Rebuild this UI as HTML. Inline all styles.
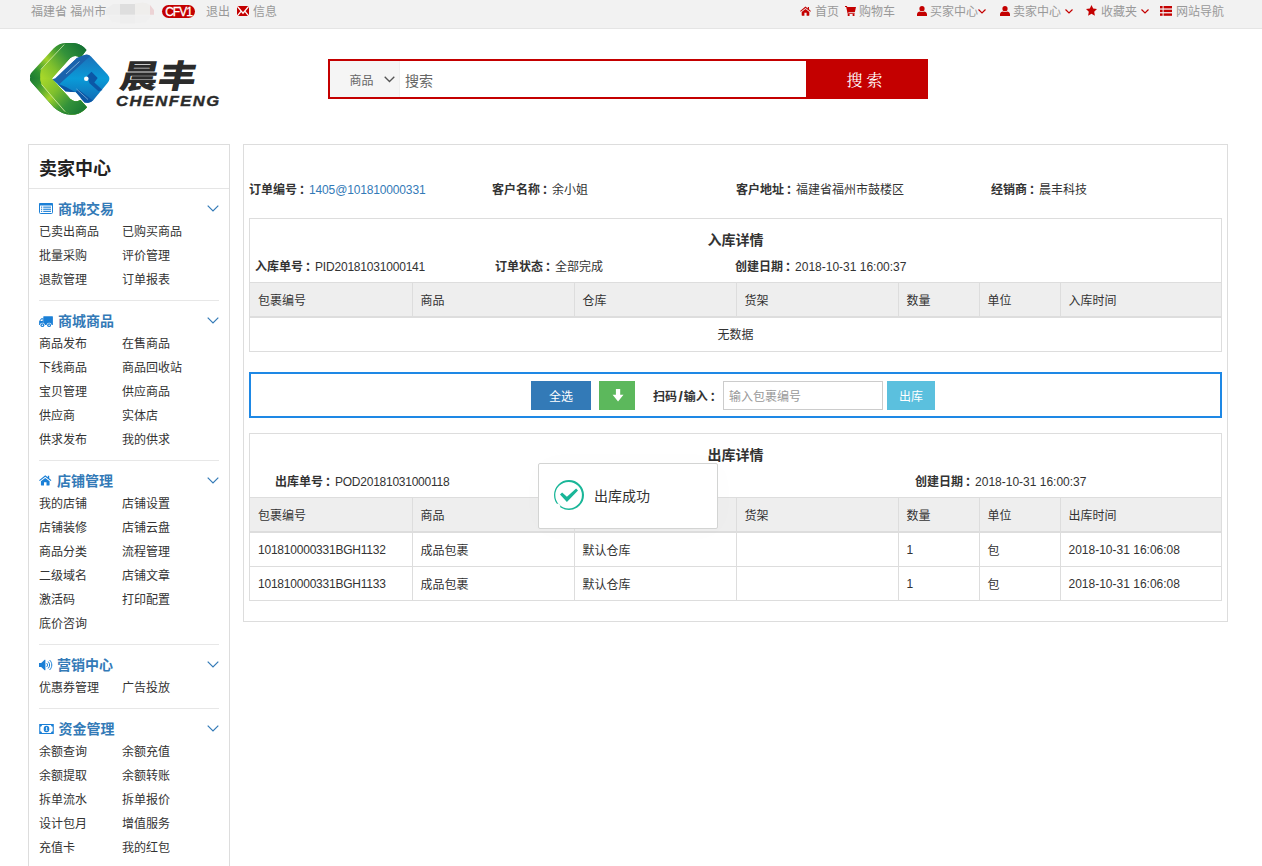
<!DOCTYPE html>
<html lang="zh-CN">
<head>
<meta charset="utf-8">
<title>卖家中心 - 出库</title>
<style>
*{box-sizing:border-box;margin:0;padding:0}
html,body{width:1262px;height:866px;overflow:hidden;background:#fff}
body{font-family:"Liberation Sans","Noto Sans CJK SC",sans-serif;font-size:12px;color:#333;position:relative;line-height:17px}
a{text-decoration:none;color:inherit}
.abs{position:absolute;white-space:nowrap}
/* top bar */
#topbar{position:absolute;left:0;top:0;width:1262px;height:29px;background:#f2f2f2;border-bottom:1px solid #e5e5e5;color:#999}
#topbar .t{position:absolute;top:4px;line-height:17px;white-space:nowrap}
#topbar svg{position:absolute}
.badge{position:absolute;left:162px;top:5px;width:33px;height:13px;border-radius:7px;background:#c40000;color:#fff;font-size:12px;line-height:15px;text-align:center;letter-spacing:-1px;padding-right:0;font-weight:normal;-webkit-text-stroke:0.3px #fff}
/* header */
#search{position:absolute;left:328px;top:59px;width:600px;height:40px;border:2px solid #c40000;background:#fff}
#search .sel{position:absolute;left:0;top:0;width:70px;height:36px;background:#f5f5f5;border-right:1px solid #eee;color:#666}
#search .sel span{position:absolute;left:19.500px;top:12px;line-height:17px}
#search .q{position:absolute;left:75px;top:9.500px;font-size:14px;line-height:20px;color:#666}
#search .btn{position:absolute;left:476px;top:-2px;width:122px;height:40px;background:#c40000;color:#fff;font-family:"Liberation Serif","Noto Serif CJK SC",serif;font-size:16px;line-height:44px;text-align:center;letter-spacing:4px;padding-left:0;text-indent:-1px}
/* sidebar */
#side{position:absolute;left:28px;top:144px;width:202px;height:740px;border:1px solid #ddd;background:#fff}
#side h2{position:absolute;left:10px;top:12px;font-size:18px;line-height:24px;font-weight:bold;color:#222}
#side .hr0{position:absolute;left:0;top:43px;width:200px;height:1px;background:#e5e5e5}
.sec{position:absolute;left:10px;width:180px;border-top:1px solid #e7e7e7}
.sec.first{border-top-color:transparent}
.sec .hd{position:absolute;left:0;top:10px;height:20px;line-height:20px;font-size:14px;font-weight:bold;color:#337ab7;white-space:nowrap}
.sec .hd span{position:absolute;left:19px;top:0}
.sec .hd svg{position:absolute;left:0;top:4px}
.sec .chev{position:absolute;right:0.300px;top:16px}
.sec a{position:absolute;line-height:24px;height:24px;white-space:nowrap;color:#333}
.c1{left:0}.c2{left:83px}
/* main */
#main{position:absolute;left:243px;top:144px;width:985px;height:478px;border:1px solid #ddd;background:#fff}
.lbl{font-weight:bold}
.panel{position:absolute;left:5px;width:973px;border:1px solid #ddd;background:#fff}
.panel .ttl{position:absolute;left:0;width:971px;text-align:center;top:11px;font-size:14px;font-weight:bold;line-height:20px}
table{position:absolute;left:0;width:971px;border-collapse:collapse;table-layout:fixed;font-size:12px}
th,td{border:1px solid #ddd;padding:9px 8px 7px;line-height:17px;text-align:left;font-weight:normal;height:34px;white-space:nowrap;overflow:hidden}
th{background:#eee;border-bottom:2px solid #ddd;padding:10px 8px 6px}
tr>*:first-child{border-left:none}
tr>*:last-child{border-right:none}
tbody tr:last-child td{border-bottom:none}
#scan{position:absolute;left:5px;top:227px;width:973px;height:46px;border:2px solid #1e88e5;background:#fff}
#scan .b{position:absolute;top:7px;height:29px;line-height:33px;color:#fff;text-align:center}
#toast{position:absolute;left:538px;top:463px;width:180px;height:66px;border:1px solid #d3d4d3;border-radius:2px;background:#fff;box-shadow:1px 1px 30px rgba(0,0,0,.015)}
#toast span{position:absolute;left:55px;top:20px;font-size:14px;line-height:24px;color:#333}
#toast svg{position:absolute;left:15px;top:16px}
#topbar .blur{position:absolute;left:108px;top:3px;width:44px;height:20px;border-radius:10px;background:radial-gradient(ellipse at 45% 45%,#e4e4e4 0,#ececec 40%,#f2f2f2 75%)}
#scan .inp{position:absolute;left:472px;top:7px;width:160px;height:29px;border:1px solid #ccc;color:#999;line-height:31px;padding-left:5px;white-space:nowrap}
#logo{position:absolute;left:0;top:0}
#logo .cn{position:absolute;left:115.500px;top:55px;font-family:"Liberation Sans","Noto Sans CJK SC",sans-serif;font-weight:900;font-size:32.500px;line-height:44px;color:#2b2b2b;transform:skewX(-12deg) scaleX(1.170);transform-origin:left bottom;white-space:nowrap}
#logo .en{position:absolute;left:115.500px;top:93px;font-family:"Liberation Sans",sans-serif;font-weight:bold;font-style:italic;font-size:14px;line-height:17px;letter-spacing:1.200px;color:#2b2b2b;white-space:nowrap;transform:scaleX(1.185);transform-origin:left center;-webkit-text-stroke:0.350px #2b2b2b}
.lbl i{font-style:normal;position:relative;left:2px}
td.cj{padding:10px 8px 6px}
td.ls{letter-spacing:-0.220px}

</style>
</head>
<body>
<div id="topbar">
  <span class="t" style="left:31px">福建省 福州市</span>
  <svg width="50" height="22" viewBox="0 0 50 22" style="left:106px;top:2px"><path d="M0 12.700V7L7 2H14V12.700Z" fill="#ededed"/><rect x="14" y="2" width="15" height="10.700" fill="#dedede"/><path d="M29 1.500L36 0.500Q41 0.500 44 3V12.700H29Z" fill="#efeeec"/><path d="M44 3L48 8V12.700H44Z" fill="#ecd3d5"/><rect x="14" y="13.300" width="15" height="8.200" fill="#eeeeee"/><path d="M1 13.300H14V21L6 20Z" fill="#f0f0f0"/><path d="M29 13.300H46L40 20L29 21.500Z" fill="#f0f0f0"/></svg>
  <span class="badge">CFV1</span>
  <span class="t" style="left:206px">退出</span>
  <svg width="12" height="10" viewBox="0 0 12 10" style="left:237.200px;top:5.800px"><rect width="12" height="10.200" fill="#c40000"/><path d="M.300 .300L6 7.200 11.700 .300M.300 9.900L4.200 5.200M11.700 9.900L7.800 5.200" fill="none" stroke="#fff" stroke-width="1.300"/></svg>
  <span class="t" style="left:253px">信息</span>
  <svg width="11" height="10" viewBox="0 0 13 11" style="left:800px;top:5.600px"><g fill="#c40000"><path d="M6.5 0.200L0.100 5.500l.7.850L6.500 1.900l5.700 4.450.7-.850L10.600 3.500V.900H9.200v1.500z"/><path d="M6.500 3L2 6.600V10.500c0 .300.200.500.500.500H5.200V7.600h2.600V11h2.700c.300 0 .500-.200.500-.500V6.600z"/></g></svg>
  <span class="t" style="left:815px">首页</span>
  <svg width="11" height="10" viewBox="0 0 11 10" style="left:845px;top:6px"><g fill="#c40000"><path d="M0 0h1.900l.400 1H11L9.900 6H3.300l.200.800h6.200v.900H2.600L1.200 .900H0z"/><rect x="2.700" y="7.900" width="1.900" height="2.100" rx=".600"/><rect x="7.600" y="7.900" width="1.900" height="2.100" rx=".600"/></g></svg>
  <span class="t" style="left:859px">购物车</span>
  <svg width="10" height="10" viewBox="0 0 10 10" style="left:917px;top:6px"><g fill="#c40000"><circle cx="5" cy="2.700" r="2.600"/><path d="M0 10V8.300C0 6.500 1.500 5.600 3 5.400c.6.500 1.300.700 2 .700s1.400-.200 2-.700c1.500.200 3 1.100 3 2.900V10z"/></g></svg>
  <span class="t" style="left:930px">买家中心</span>
  <svg width="8" height="5" viewBox="0 0 8 5" style="left:977.500px;top:8.500px"><path d="M.5.500L4 4 7.500.500" fill="none" stroke="#c40000" stroke-width="1.200"/></svg>
  <svg width="10" height="10" viewBox="0 0 10 10" style="left:1000px;top:6px"><g fill="#c40000"><circle cx="5" cy="2.700" r="2.600"/><path d="M0 10V8.300C0 6.500 1.500 5.600 3 5.400c.6.500 1.300.700 2 .700s1.400-.200 2-.700c1.500.200 3 1.100 3 2.900V10z"/></g></svg>
  <span class="t" style="left:1013px">卖家中心</span>
  <svg width="8" height="5" viewBox="0 0 8 5" style="left:1064.800px;top:8.500px"><path d="M.5.500L4 4 7.500.500" fill="none" stroke="#c40000" stroke-width="1.200"/></svg>
  <svg width="11" height="11" viewBox="0 0 11 11" style="left:1086px;top:5px"><path d="M5.500 0l1.700 3.600 3.800.500-2.800 2.700.7 3.900-3.400-1.900-3.400 1.900.7-3.900L0 4.100l3.800-.500z" fill="#c40000"/></svg>
  <span class="t" style="left:1101px">收藏夹</span>
  <svg width="8" height="5" viewBox="0 0 8 5" style="left:1140.800px;top:8.500px"><path d="M.5.500L4 4 7.500.500" fill="none" stroke="#c40000" stroke-width="1.200"/></svg>
  <svg width="12" height="10" viewBox="0 0 12 10" style="left:1160px;top:6px"><g fill="#c40000"><rect x="0" y="0" width="2.600" height="2.400"/><rect x="3.600" y="0" width="8.400" height="2.400"/><rect x="0" y="3.700" width="2.600" height="2.400"/><rect x="3.600" y="3.700" width="8.400" height="2.400"/><rect x="0" y="7.400" width="2.600" height="2.400"/><rect x="3.600" y="7.400" width="8.400" height="2.400"/></g></svg>
  <span class="t" style="left:1176px">网站导航</span>
</div>

<div id="logo">
<svg width="90" height="80" viewBox="0 0 90 80" style="position:absolute;left:26px;top:38px">
<defs>
<linearGradient id="gA1" gradientUnits="userSpaceOnUse" x1="4" y1="40" x2="46" y2="4"><stop offset="0" stop-color="#1b7933"/><stop offset=".18" stop-color="#2e9131"/><stop offset=".45" stop-color="#a2d22a"/><stop offset=".7" stop-color="#3f9b32"/><stop offset="1" stop-color="#1a7532"/></linearGradient>
<linearGradient id="gA2" gradientUnits="userSpaceOnUse" x1="4" y1="40" x2="46" y2="77"><stop offset="0" stop-color="#1b7933"/><stop offset=".18" stop-color="#2e9131"/><stop offset=".5" stop-color="#a2d22a"/><stop offset=".75" stop-color="#3f9b32"/><stop offset="1" stop-color="#1a7532"/></linearGradient>
<linearGradient id="gB1" gradientUnits="userSpaceOnUse" x1="16" y1="40" x2="56" y2="8"><stop offset="0" stop-color="#a8d82a"/><stop offset=".3" stop-color="#7fc02d"/><stop offset=".65" stop-color="#33923a"/><stop offset="1" stop-color="#157233"/></linearGradient>
<linearGradient id="gB2" gradientUnits="userSpaceOnUse" x1="16" y1="40" x2="56" y2="74"><stop offset="0" stop-color="#a8d82a"/><stop offset=".35" stop-color="#7fc02d"/><stop offset=".7" stop-color="#33923a"/><stop offset="1" stop-color="#1b7a33"/></linearGradient>
<linearGradient id="gC" x1="0" y1="0" x2="0" y2="1"><stop offset="0" stop-color="#1b6fb8"/><stop offset=".5" stop-color="#0a9bd8"/><stop offset="1" stop-color="#1268b2"/></linearGradient>
<clipPath id="up"><rect x="0" y="0" width="90" height="40.200"/></clipPath>
<clipPath id="dn"><rect x="0" y="40.200" width="90" height="40"/></clipPath>
</defs>
<path d="M4.200 39.700Q3.200 37.200 6 34L27.700 10.200Q33.500 4.600 41 5L48 5.100Q56 6 60.500 12L54.500 19.900Q49 16.300 44.400 19.900L25.900 40.700L44.400 61Q49 65.200 54.500 61.900L61 69.300Q55 76.700 46 76.700Q36 77 27.700 69.300L6 45Q3.200 42 4.200 39.700Z" fill="url(#gA1)"/><path d="M4.200 39.700Q3.200 37.200 6 34L27.700 10.200Q33.500 4.600 41 5L48 5.100Q56 6 60.500 12L54.500 19.900Q49 16.300 44.400 19.900L25.900 40.700L44.400 61Q49 65.200 54.500 61.900L61 69.300Q55 76.700 46 76.700Q36 77 27.700 69.300L6 45Q3.200 42 4.200 39.700Z" fill="url(#gA2)" clip-path="url(#dn)"/>
<path d="M38.500 6.500Q44 4.800 49 5.300Q56 6.300 60.500 12L54.500 19.900Q49 16.300 44.400 19.900L25.900 40.700L44.400 61Q49 65.200 54.500 61.900L61 69.300Q56 75.500 48 76.500Q43 76.800 39.200 73.500L15.700 46.500Q13 40 15 31.600Z" fill="url(#gB1)"/><path d="M38.500 6.500Q44 4.800 49 5.300Q56 6.300 60.500 12L54.500 19.900Q49 16.300 44.400 19.900L25.900 40.700L44.400 61Q49 65.200 54.500 61.900L61 69.300Q56 75.500 48 76.500Q43 76.800 39.200 73.500L15.700 46.500Q13 40 15 31.600Z" fill="url(#gB2)" clip-path="url(#dn)"/>
<path d="M38.200 6.600L14.800 31.500M15.600 46.500L39 73.600" stroke="#e9f6c4" stroke-width=".8" fill="none" opacity=".85"/>
<path d="M51.800 19.900L58.500 17Q62 15.600 65 18.400L81.500 36.500Q85.200 40.700 81.500 45L67 62.600Q64.800 65 61.500 64.700L58.500 64.600L49.500 54.200L39.700 53.600L26.800 41.600Z" fill="url(#gC)"/>
<path d="M50.500 19.900L58.500 17Q61 16 64.200 18L33 46.600L26.800 41.600Z" fill="#1a63ad"/>
<path d="M26.800 41.600L31.500 45.800L40 49L49.800 54.400L39.700 53.600Z" fill="#0c55a4"/>
<path d="M49.500 54L52 51.200L66.800 62.600Q64.800 64.900 61.500 64.700L58.500 64.600Z" fill="#0c57a5"/>
<path d="M53.500 23.500L40 36" stroke="#cfe9f7" stroke-width=".7" opacity=".8"/>
<path d="M50.500 51L62 61.500" stroke="#cfe9f7" stroke-width=".7" opacity=".7"/>
<path d="M61 38L65.500 33.800L71.700 40L68.300 44.500L76.500 52L72.500 53.300L63.500 45.300Z" fill="#0b57a6"/>
<circle cx="60.300" cy="40.800" r="2.300" fill="#fff"/>
<path d="M39.700 53.700L49.700 54.300L54.600 60L44.500 60.600Z" fill="#fff"/>
<path d="M44.500 20.200L50.300 20.200L29 40.600L26.200 40.600Z" fill="#fff"/>
</svg>
<div class="cn">晨丰</div>
<div class="en">CHENFENG</div>
</div>

<div id="search">
  <div class="sel"><span>商品</span><svg width="11" height="7" viewBox="0 0 11 7" style="position:absolute;left:53.500px;top:14.500px"><path d="M.7.700L5.500 5.500 10.300.700" fill="none" stroke="#555" stroke-width="1.300"/></svg></div>
  <div class="q">搜索</div>
  <div class="btn">搜索</div>
</div>

<div id="side">
<h2>卖家中心</h2>
<div class="hr0"></div>
<div class="sec first" style="top:43px;height:112px">
<div class="hd"><svg width="14" height="11" viewBox="0 0 14 11" style="left:0;top:4px"><rect x="0.5" y="0.5" width="13" height="10" rx="1" fill="#fff" stroke="#1a7fd6" stroke-width="1"/><rect x="0" y="0" width="14" height="2.6" rx="1" fill="#1a7fd6"/><g fill="#1a7fd6"><rect x="2" y="3.6" width="1.2" height="1.1"/><rect x="4.2" y="3.6" width="7.8" height="1.1"/><rect x="2" y="5.7" width="1.2" height="1.1"/><rect x="4.2" y="5.7" width="7.8" height="1.1"/><rect x="2" y="7.8" width="1.2" height="1.1"/><rect x="4.2" y="7.8" width="7.8" height="1.1"/></g></svg><span style="left:19px">商城交易</span></div><svg class="chev" width="12" height="7" viewBox="0 0 12 7"><path d="M0.7 0.7L6 6l5.300-5.300" fill="none" stroke="#337ab7" stroke-width="1.2"/></svg>
<a class="c1" style="top:31px">已卖出商品</a>
<a class="c2" style="top:31px">已购买商品</a>
<a class="c1" style="top:55px">批量采购</a>
<a class="c2" style="top:55px">评价管理</a>
<a class="c1" style="top:79px">退款管理</a>
<a class="c2" style="top:79px">订单报表</a>
</div>
<div class="sec" style="top:155px;height:160px">
<div class="hd"><svg width="14" height="12" viewBox="0 0 14 12" style="left:0.3px;top:4.6px"><g fill="#1a7fd6"><rect x="4.3" y="0.2" width="9.6" height="8.9" rx="0.5"/><path d="M4.4 2.3H2.7c-.3 0-.6.1-.8.4L.4 4.700c-.2.300-.3.500-.3.800v3.600h4.300z"/></g><path d="M1.2 5.100L2.700 3.300h.9v1.800z" fill="#fff"/><circle cx="3.4" cy="9.200" r="2.500" fill="#fff"/><circle cx="3.400" cy="9.200" r="1.900" fill="#1a7fd6"/><circle cx="3.400" cy="9.200" r="0.750" fill="#fff"/><circle cx="10.1" cy="9.200" r="2.500" fill="#fff"/><circle cx="10.100" cy="9.200" r="1.900" fill="#1a7fd6"/><circle cx="10.100" cy="9.200" r="0.750" fill="#fff"/></svg><span style="left:19px">商城商品</span></div><svg class="chev" width="12" height="7" viewBox="0 0 12 7"><path d="M0.7 0.7L6 6l5.300-5.300" fill="none" stroke="#337ab7" stroke-width="1.2"/></svg>
<a class="c1" style="top:31px">商品发布</a>
<a class="c2" style="top:31px">在售商品</a>
<a class="c1" style="top:55px">下线商品</a>
<a class="c2" style="top:55px">商品回收站</a>
<a class="c1" style="top:79px">宝贝管理</a>
<a class="c2" style="top:79px">供应商品</a>
<a class="c1" style="top:103px">供应商</a>
<a class="c2" style="top:103px">实体店</a>
<a class="c1" style="top:127px">供求发布</a>
<a class="c2" style="top:127px">我的供求</a>
</div>
<div class="sec" style="top:315px;height:184px">
<div class="hd"><svg width="12.5" height="10.6" viewBox="0 0 13 11" style="left:0;top:4.300px"><g fill="#1a7fd6"><path d="M6.5 0.2L0.1 5.5l.7.85L6.5 1.9l5.7 4.45.7-.85L10.6 3.5V.9H9.2v1.5z"/><path d="M6.5 3L2 6.6V10.5c0 .3.2.5.5.5H5.2V7.6h2.6V11h2.7c.3 0 .5-.2.5-.5V6.6z"/></g></svg><span style="left:18px">店铺管理</span></div><svg class="chev" width="12" height="7" viewBox="0 0 12 7"><path d="M0.7 0.7L6 6l5.300-5.300" fill="none" stroke="#337ab7" stroke-width="1.2"/></svg>
<a class="c1" style="top:31px">我的店铺</a>
<a class="c2" style="top:31px">店铺设置</a>
<a class="c1" style="top:55px">店铺装修</a>
<a class="c2" style="top:55px">店铺云盘</a>
<a class="c1" style="top:79px">商品分类</a>
<a class="c2" style="top:79px">流程管理</a>
<a class="c1" style="top:103px">二级域名</a>
<a class="c2" style="top:103px">店铺文章</a>
<a class="c1" style="top:127px">激活码</a>
<a class="c2" style="top:127px">打印配置</a>
<a class="c1" style="top:151px">底价咨询</a>
</div>
<div class="sec" style="top:499px;height:64px">
<div class="hd"><svg width="14" height="12" viewBox="0 0 14 12" style="left:0;top:4px"><path d="M0 4h2.2L5.6.8c.3-.3.8-.1.8.3v9.8c0 .4-.5.6-.8.3L2.2 8H0z" fill="#1a7fd6"/><g fill="none" stroke="#1a7fd6" stroke-width="1" stroke-linecap="round"><path d="M7.9 4.3c.9.9.9 2.5 0 3.4"/><path d="M9.4 2.8c1.7 1.8 1.7 4.6 0 6.4"/><path d="M10.9 1.3c2.6 2.6 2.6 6.8 0 9.4"/></g></svg><span style="left:18px">营销中心</span></div><svg class="chev" width="12" height="7" viewBox="0 0 12 7"><path d="M0.7 0.7L6 6l5.300-5.300" fill="none" stroke="#337ab7" stroke-width="1.2"/></svg>
<a class="c1" style="top:31px">优惠券管理</a>
<a class="c2" style="top:31px">广告投放</a>
</div>
<div class="sec" style="top:563px;height:160px">
<div class="hd"><svg width="15" height="10" viewBox="0 0 16 11" style="left:0;top:5px"><rect x="0" y="0" width="16" height="11" fill="#1a7fd6"/><path d="M3 1.2h10c0 1 .8 1.8 1.8 1.8v5c-1 0-1.8.8-1.8 1.8H3C3 8.800 2.200 8 1.200 8V3c1 0 1.800-.800 1.800-1.800z" fill="#fff"/><ellipse cx="8" cy="5.5" rx="3.1" ry="3.5" fill="#1a7fd6"/><path d="M7.2 4.300l.9-.9h.6v3.400h.700v.700H6.900v-.700h.8V4.600l-.5.300z" fill="#fff"/></svg><span style="left:19.5px">资金管理</span></div><svg class="chev" width="12" height="7" viewBox="0 0 12 7"><path d="M0.7 0.7L6 6l5.300-5.300" fill="none" stroke="#337ab7" stroke-width="1.2"/></svg>
<a class="c1" style="top:31px">余额查询</a>
<a class="c2" style="top:31px">余额充值</a>
<a class="c1" style="top:55px">余额提取</a>
<a class="c2" style="top:55px">余额转账</a>
<a class="c1" style="top:79px">拆单流水</a>
<a class="c2" style="top:79px">拆单报价</a>
<a class="c1" style="top:103px">设计包月</a>
<a class="c2" style="top:103px">增值服务</a>
<a class="c1" style="top:127px">充值卡</a>
<a class="c2" style="top:127px">我的红包</a>
</div>
</div>
<div id="main">
  <div class="abs" style="left:5px;top:37px"><span class="lbl">订单编号<i>：</i></span><span style="color:#337ab7;letter-spacing:-0.150px">1405@101810000331</span></div>
  <div class="abs" style="left:248px;top:37px"><span class="lbl">客户名称<i>：</i></span>余小姐</div>
  <div class="abs" style="left:492px;top:37px"><span class="lbl">客户地址<i>：</i></span>福建省福州市鼓楼区</div>
  <div class="abs" style="left:747px;top:37px"><span class="lbl">经销商<i>：</i></span>晨丰科技</div>

  <div class="panel" style="top:73px;height:134px">
    <div class="ttl">入库详情</div>
    <div class="abs" style="left:5px;top:40px"><span class="lbl">入库单号<i>：</i></span><span style="letter-spacing:-0.200px">PID20181031000141</span></div>
    <div class="abs" style="left:245px;top:40px"><span class="lbl">订单状态<i>：</i></span>全部完成</div>
    <div class="abs" style="left:485px;top:40px"><span class="lbl">创建日期<i>：</i></span>2018-10-31 16:00:37</div>
    <table style="top:63px">
      <colgroup><col style="width:162px"><col style="width:162px"><col style="width:162px"><col style="width:162px"><col style="width:81px"><col style="width:81px"><col style="width:161px"></colgroup>
      <thead><tr><th>包裹编号</th><th>商品</th><th>仓库</th><th>货架</th><th>数量</th><th>单位</th><th>入库时间</th></tr></thead>
      <tbody><tr><td colspan="7" style="text-align:center">无数据</td></tr></tbody>
    </table>
  </div>

  <div id="scan">
    <div class="b" style="left:280px;width:60px;background:#337ab7">全选</div>
    <div class="b" style="left:348px;width:36px;background:#5cb85c"><svg width="12" height="13" viewBox="0 0 12 13" style="position:absolute;left:12.700px;top:7.800px"><path d="M3.900 0h4.300v5.800h3.300L6.050 12.500.600 5.800h3.300z" fill="#fff"/></svg></div>
    <div class="abs lbl" style="left:402px;top:15px">扫码<b style="font-weight:bold;font-size:15.500px;line-height:0;position:relative;top:1px;padding:0 0.900px 0 1.500px">/</b>输入<i>：</i></div>
    <div class="inp">输入包裹编号</div>
    <div class="b" style="left:636px;width:48px;background:#5bc0de">出库</div>
  </div>

  <div class="panel" style="top:288px;height:168px">
    <div class="ttl">出库详情</div>
    <div class="abs" style="left:25px;top:40px"><span class="lbl">出库单号<i>：</i></span><span style="letter-spacing:-0.250px">POD20181031000118</span></div>
    <div class="abs" style="left:665px;top:40px"><span class="lbl">创建日期<i>：</i></span>2018-10-31 16:00:37</div>
    <table style="top:63px">
      <colgroup><col style="width:162px"><col style="width:162px"><col style="width:162px"><col style="width:162px"><col style="width:81px"><col style="width:81px"><col style="width:161px"></colgroup>
      <thead><tr><th>包裹编号</th><th>商品</th><th>仓库</th><th>货架</th><th>数量</th><th>单位</th><th>出库时间</th></tr></thead>
      <tbody>
        <tr><td class="ls">101810000331BGH1132</td><td class="cj">成品包裹</td><td class="cj">默认仓库</td><td></td><td>1</td><td class="cj">包</td><td>2018-10-31 16:06:08</td></tr>
        <tr><td class="ls">101810000331BGH1133</td><td class="cj">成品包裹</td><td class="cj">默认仓库</td><td></td><td>1</td><td class="cj">包</td><td>2018-10-31 16:06:08</td></tr>
      </tbody>
    </table>
  </div>
</div>

<div id="toast"><svg width="30" height="30" viewBox="0 0 30 30"><path fill-rule="evenodd" fill="#19b698" d="M15 0a15 15 0 1 0 0 30a15 15 0 1 0 0-30zM14.600 1.900a13.300 13.300 0 1 1 0 26.600a13.300 13.300 0 1 1 0-26.600z"/><path d="M4.200 23.300l2.300 2.700-2.300 3.500-4-3z" fill="#fff"/><path d="M6 14.400L8.100 12.600 12.900 16.800 22.100 8.500 24 10.500 12.900 22z" fill="#19b698"/></svg><span>出库成功</span></div>

</body>
</html>
